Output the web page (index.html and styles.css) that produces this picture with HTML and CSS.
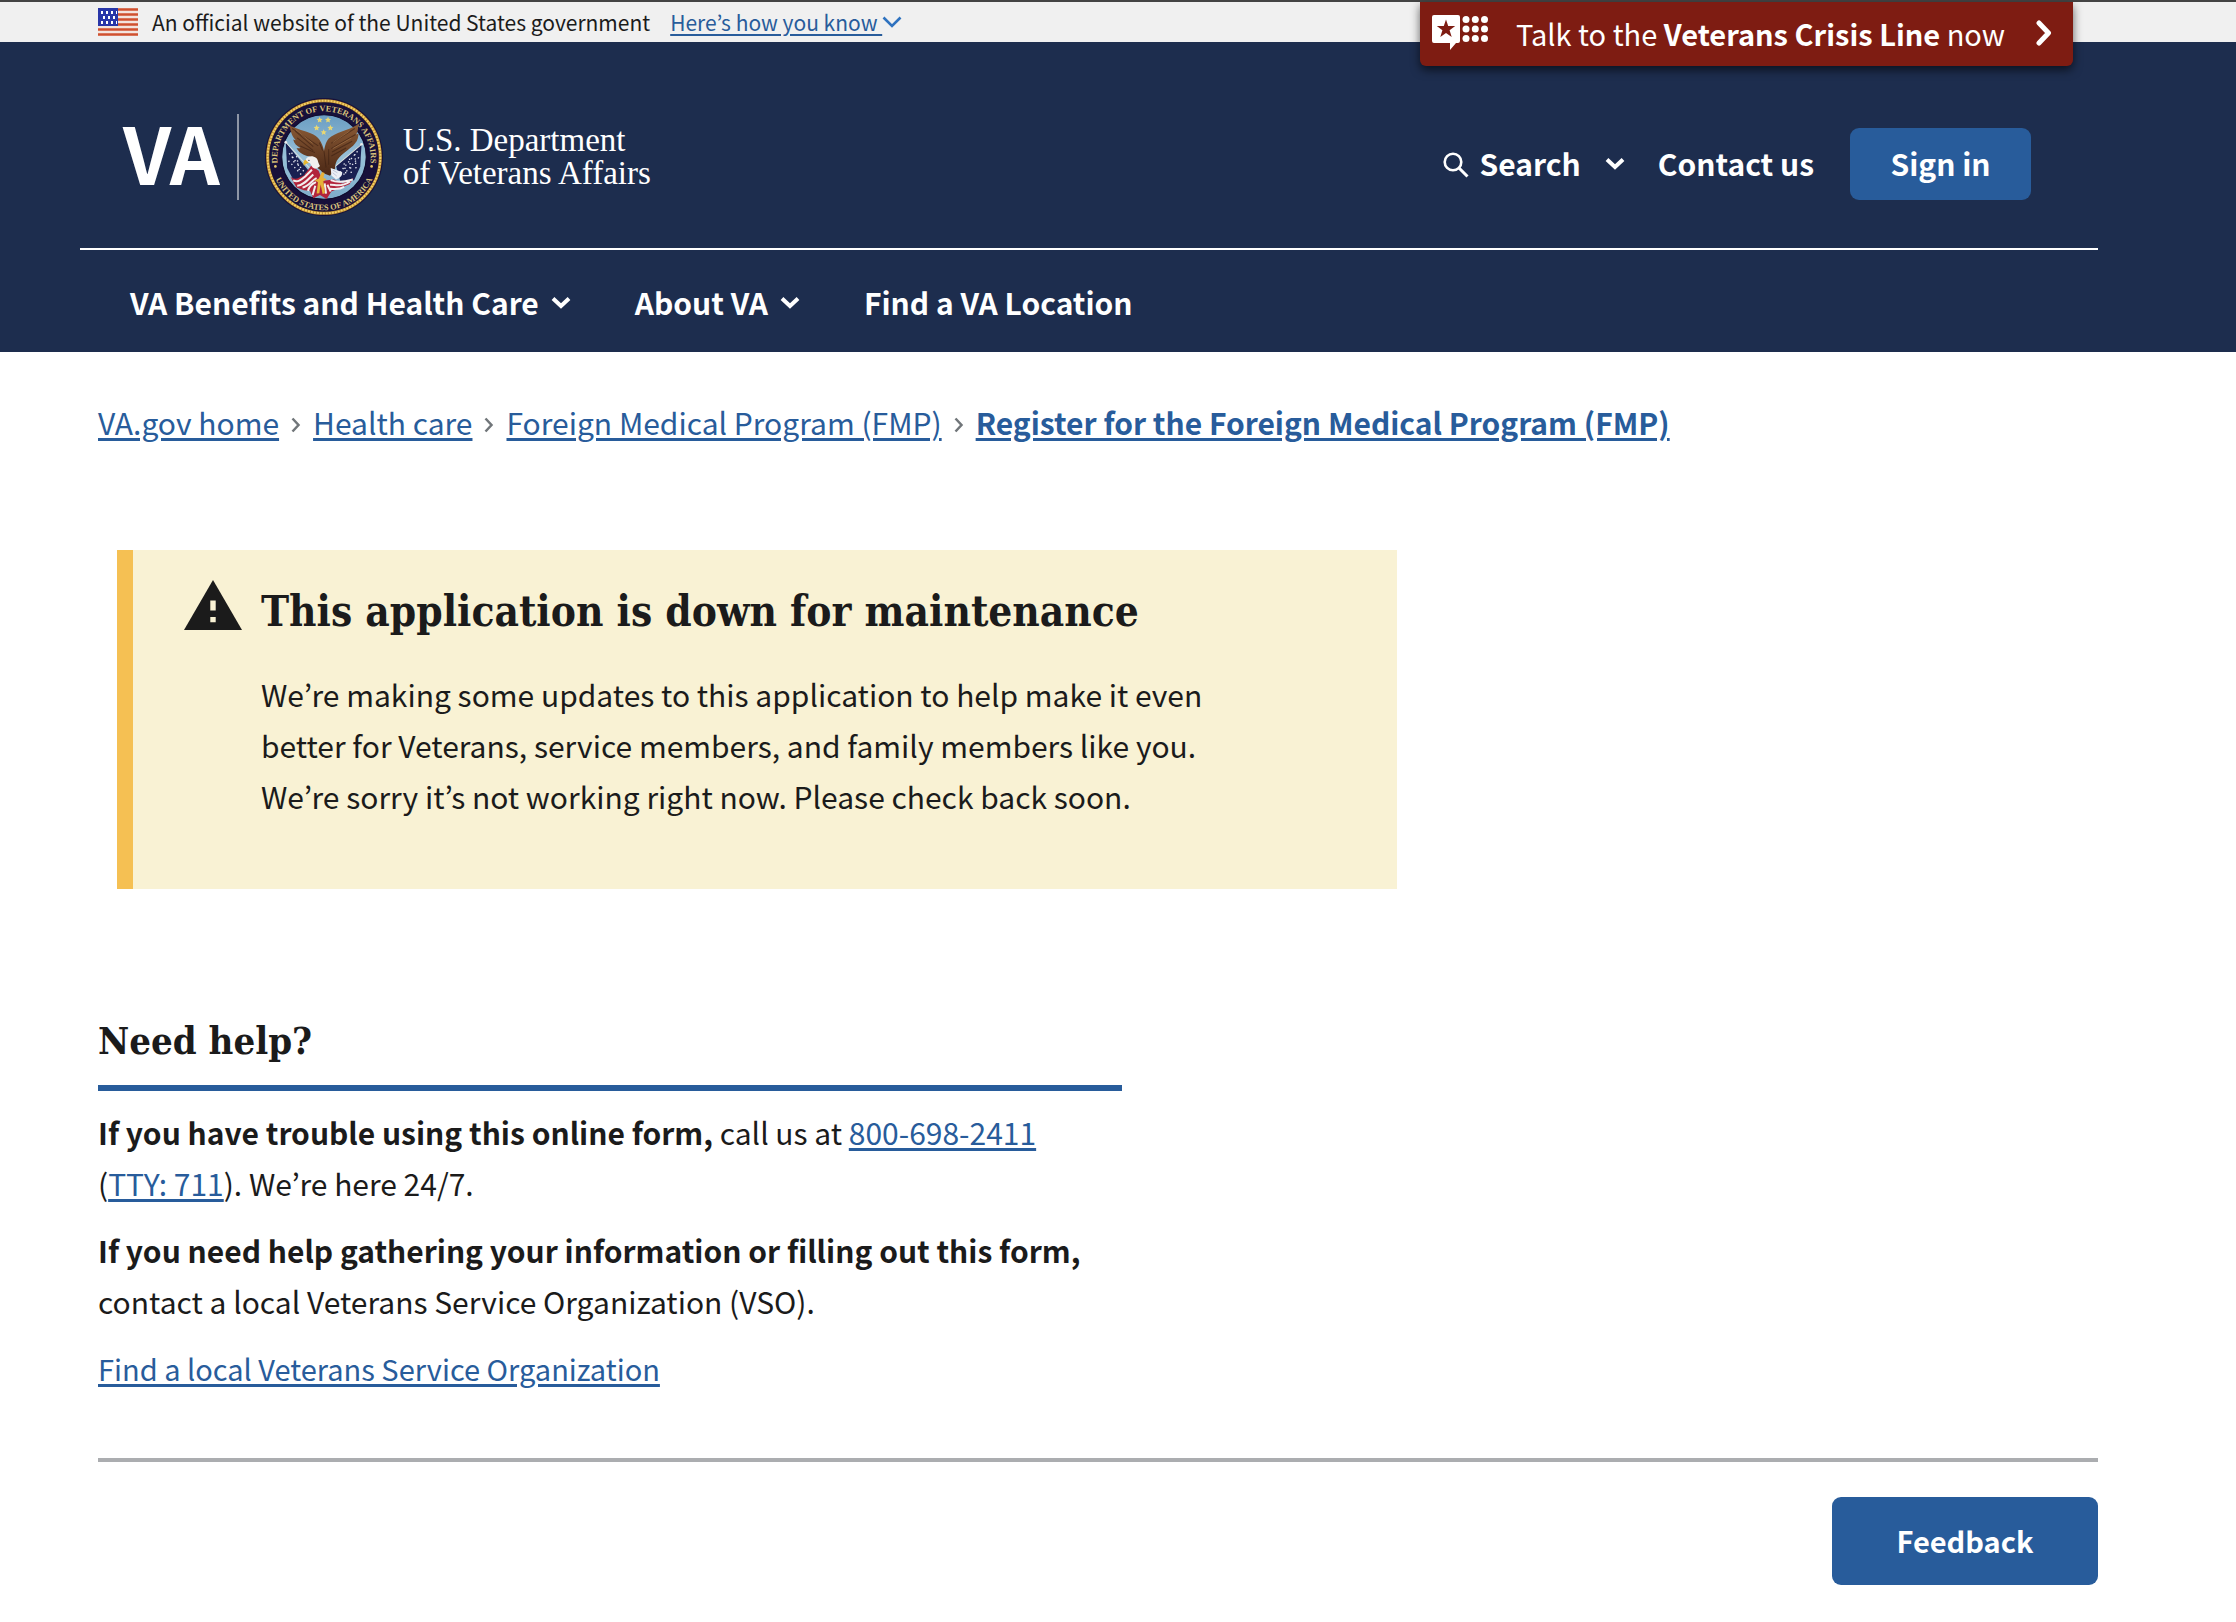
FILE: index.html
```html
<!DOCTYPE html>
<html lang="en">
<head>
<meta charset="utf-8">
<meta name="viewport" content="width=device-width, initial-scale=1">
<title>Register for the Foreign Medical Program (FMP) | Veterans Affairs</title>
<link rel="stylesheet" href="styles.css">
</head>
<body>
<div class="gov-banner">
  <div class="gov-message">
    <svg class="flag" viewBox="0 0 40 28" aria-hidden="true">
      <rect width="40" height="28" fill="#f3e4de"/>
      <path d="M0 1.500h40M0 6.500h40M0 11.500h40M0 16.500h40M0 21.500h40M0 26.500h40" stroke="#d0502f" stroke-width="2.500"/>
      <rect width="20" height="18" fill="#2836a8"/>
      <path d="M3 4.500h16M5 9.500h15M3 14.500h16" stroke="#fff" stroke-width="3" stroke-dasharray="2 3"/>
    </svg>
    <span>An official website of the United States government</span>
    <button class="banner-toggle" type="button"><span class="toggle-label">Here’s how you know </span><svg class="toggle-chevron" viewBox="0 0 20 12" aria-hidden="true"><path d="M1.500 1.500 10 10l8.500-8.500" fill="none" stroke="#2e72bf" stroke-width="2.600"/></svg></button>
  </div>
  <button class="crisis-line" type="button">
    <svg class="crisis-icon" viewBox="0 0 56 36" aria-hidden="true">
      <path fill="#fff" d="M2 0h24q2 0 2 2v24q0 2-2 2h-2l-6 7v-7H2q-2 0-2-2V2Q0 0 2 0z"/>
      <path fill="#7e1c12" d="m14 4.500 2.200 6.600h7l-5.600 4.200 2.100 6.700-5.700-4.100L8.300 22l2.100-6.700-5.600-4.200h7z"/>
      <g fill="#fff"><circle cx="34" cy="4.500" r="3.500"/><circle cx="43.300" cy="4.500" r="3.500"/><circle cx="52.500" cy="4.500" r="3.500"/><circle cx="34" cy="14" r="3.500"/><circle cx="43.300" cy="14" r="3.500"/><circle cx="52.500" cy="14" r="3.500"/><circle cx="34" cy="23.500" r="3.500"/><circle cx="43.300" cy="23.500" r="3.500"/><circle cx="52.500" cy="23.500" r="3.500"/></g>
    </svg>
    <span>Talk to the <strong>Veterans Crisis Line</strong> now</span>
    <svg class="crisis-arrow" viewBox="0 0 16 26" aria-hidden="true"><path d="m3 3 9.500 10L3 23" fill="none" stroke="#fff" stroke-width="5" stroke-linejoin="round" stroke-linecap="round"/></svg>
  </button>
</div>

<header class="site-header">
  <div class="header-top">
    <a class="logo" href="#" aria-label="VA | U.S. Department of Veterans Affairs">
      <span class="logo-va">VA</span>
      <span class="logo-rule"></span>
      <svg class="seal" viewBox="28 25 352 352" aria-hidden="true">
        <defs>
          <path id="arc-top" d="M66 220A139 139 0 1 1 342 220"/>
          <path id="arc-bottom" d="M47 226A159 159 0 0 0 361 226"/>
          <linearGradient id="sky" x1="0" y1="0" x2="0" y2="1"><stop offset="0" stop-color="#6a9dc2"/><stop offset=".5" stop-color="#98c0d8"/><stop offset="1" stop-color="#7eacca"/></linearGradient>
          <linearGradient id="wing" x1="0" y1="0" x2="0" y2="1"><stop offset="0" stop-color="#8a5a35"/><stop offset="1" stop-color="#4a2715"/></linearGradient>
        </defs>
        <circle cx="204" cy="201" r="176" fill="#17103a"/>
        <circle cx="204" cy="201" r="168" fill="none" stroke="#b98a2e" stroke-width="9"/>
        <circle cx="204" cy="201" r="168" fill="none" stroke="#f3cf67" stroke-width="6" stroke-dasharray="6 3"/>
        <circle cx="204" cy="201" r="126" fill="url(#sky)" stroke="#0e0a2c" stroke-width="3"/>
        <g class="seal-text">
          <text><textPath href="#arc-top" startOffset="50%" text-anchor="middle">DEPARTMENT OF VETERANS AFFAIRS</textPath></text>
          <text><textPath href="#arc-bottom" startOffset="50%" text-anchor="middle">UNITED STATES OF AMERICA</textPath></text>
        </g>
        <circle cx="59" cy="229" r="4" fill="#e2c46b"/><circle cx="346" cy="229" r="4" fill="#e2c46b"/>
        <g fill="#ead873">
          <path id="star" d="m191 81 2.600 6 6.400.6-4.800 4.300 1.400 6.300-5.600-3.300-5.600 3.300 1.400-6.300-4.800-4.300 6.400-.6z"/>
          <use href="#star" x="25"/><use href="#star" x="-9" y="24"/><use href="#star" x="32" y="24"/><use href="#star" x="12" y="37"/>
        </g>
        <path d="m90 158 70 86-10 36-38-12-18-34z" fill="#191f51"/>
        <path d="m316 162-76 66 14 50 40-8 18-40z" fill="#191f51"/>
        <path d="M100 190l52 64M98 212l44 48M108 188l8 36M122 198l10 50M304 184l-52 62M308 202l-46 52M296 192l4 48M280 206l6 48M264 220l6 36" stroke="#e6e8f0" stroke-width="4" stroke-dasharray="4 9" fill="none"/>
        <path d="m90 157 92 100M316 163l-88 74" stroke="#dfe0dc" stroke-width="3"/>
        <circle cx="90" cy="157" r="4" fill="#eee"/><circle cx="316" cy="163" r="4" fill="#eee"/>
        <path d="M104 260c14 12 26 2 40-4l22-30 22 16 12 30 34-4 24 12 34-16-12 18-34 14-20 8-14 22-20-12-20 10-10-22-18-2-22-8z" fill="#b2243b"/>
        <path d="M112 271c14 7 24-2 36-12l20-20M124 287c16 0 30-16 48-34M140 292c18-3 28-22 42-28M156 302c4-14 14-22 24-26M222 284c14-2 30 10 60-10M222 296c14 0 26 4 42-6M224 270c20 8 34 6 66-2M170 315l8-28M210 310l-4-30M224 304l-10-20" stroke="#f2eeee" stroke-width="6" fill="none"/>
        <path fill="url(#wing)" d="M102 108c24 10 44 16 62 22 24 9 34 26 40 52 4-18 6-26 14-36 18-18 58-24 87-42 2 14-1 23-5 30l7-3c-1 15-4 22-10 29-7 10-20 18-36 31-17 14-24 26-24 44l-15 22-22-8c-6-14-22-14-30-30-6-11-6-16-10-20-18-3-30-11-38-25 4 1 8 1 12 0-12-6-19-13-22-25l8 2c-9-9-16-22-18-43z"/>
        <path d="M118 124l54 46M124 144l48 38M133 168l44 20M109 116l78 52M296 116l-70 44M298 134l-72 42M288 154l-60 32M270 174l-44 24M204 184l6 48M218 178v46M190 158l10 24" stroke="#3d2012" stroke-width="3" fill="none" opacity=".65"/>
        <path d="M120 120l50 40M280 124l-50 34M286 144l-56 32" stroke="#a57548" stroke-width="2" fill="none"/>
        <path d="M149 211c3-13 20-16 32-7 6 5 4 12 11 24-8 9-18 10-24 1l-6-10c-5 1-10-2-13-8z" fill="#f1f0ef"/>
        <path d="M149 209c-6 2-8 8-5 18 5-5 9-7 15-8z" fill="#e8b72f"/><circle cx="159" cy="211" r="2" fill="#222"/>
        <path d="m224 234 34 12c2 10-6 18-18 22l-14-12z" fill="#eceff5"/><path d="M230 240l14 8M230 248l12 10" stroke="#aab4ca" stroke-width="2"/>
        <path d="M198 246l-10 20-12 4 10 6-4 34 8-1 4-26 6 28 7-2-5-36 10-6-10-4 4-14z" fill="#e6b23a"/>
      </svg>
      <span class="logo-name">U.S. Department<br>of Veterans Affairs</span>
    </a>
    <div class="header-actions">
      <button class="header-link search" type="button">
        <svg class="search-icon" viewBox="0 0 26 26" aria-hidden="true"><circle cx="10" cy="10" r="8.300" fill="none" stroke="#fff" stroke-width="2.600"/><path d="m16 16 8.500 8.500" stroke="#fff" stroke-width="3"/></svg>
        <span>Search</span>
        <svg class="chevron" viewBox="0 0 20 13" aria-hidden="true"><path d="m2 2.500 8 7.500 8-7.500" fill="none" stroke="#fff" stroke-width="4"/></svg>
      </button>
      <a class="header-link" href="#">Contact us</a>
      <button class="button sign-in" type="button">Sign in</button>
    </div>
  </div>
  <nav class="main-nav" aria-label="Main">
    <button class="header-link" type="button">VA Benefits and Health Care <svg class="chevron" viewBox="0 0 20 13" aria-hidden="true"><path d="m2 2.500 8 7.500 8-7.500" fill="none" stroke="#fff" stroke-width="4"/></svg></button>
    <button class="header-link" type="button">About VA <svg class="chevron" viewBox="0 0 20 13" aria-hidden="true"><path d="m2 2.500 8 7.500 8-7.500" fill="none" stroke="#fff" stroke-width="4"/></svg></button>
    <a class="header-link" href="#">Find a VA Location</a>
  </nav>
</header>

<main class="content">
  <nav class="breadcrumbs" aria-label="Breadcrumb">
    <a href="#">VA.gov home</a>
    <svg class="crumb-arrow" viewBox="0 0 10 16" aria-hidden="true"><path d="m1.500 1.500 6 6.500-6 6.500" fill="none" stroke="#71767a" stroke-width="2.500"/></svg>
    <a href="#">Health care</a>
    <svg class="crumb-arrow" viewBox="0 0 10 16" aria-hidden="true"><path d="m1.500 1.500 6 6.500-6 6.500" fill="none" stroke="#71767a" stroke-width="2.500"/></svg>
    <a href="#">Foreign Medical Program (FMP)</a>
    <svg class="crumb-arrow" viewBox="0 0 10 16" aria-hidden="true"><path d="m1.500 1.500 6 6.500-6 6.500" fill="none" stroke="#71767a" stroke-width="2.500"/></svg>
    <a class="current" href="#" aria-current="page">Register for the Foreign Medical Program (FMP)</a>
  </nav>

  <section class="alert">
    <svg class="alert-icon" viewBox="0 0 58 50" aria-hidden="true"><path fill="#1b1b1b" d="M29 0 58 50H0z"/><path fill="#f9f2d4" d="M26.300 20.500h5.400v10h-5.400zM26.300 37h5.400v5.300h-5.400z"/></svg>
    <div class="alert-body">
      <h1 class="alert-title">This application is down for maintenance</h1>
      <p>We’re making some updates to this application to help make it even better for Veterans, service members, and family members like you. We’re sorry it’s not working right now. Please check back soon.</p>
    </div>
  </section>

  <section class="help">
    <h2 class="help-title">Need help?</h2>
    <p><strong>If you have trouble using this online form,</strong> call us at <a href="#">800-698-2411</a> <span class="tty">(<a href="#">TTY: 711</a>).</span> We’re here 24/7.</p>
    <p><strong>If you need help gathering your information or filling out this form,</strong> contact a local Veterans Service Organization (VSO).</p>
    <p class="help-link"><a href="#">Find a local Veterans Service Organization</a></p>
  </section>

  <div class="feedback">
    <button class="button feedback-button" type="button">Feedback</button>
  </div>
</main>
</body>
</html>
```
FILE: styles.css
```css
* { box-sizing: border-box; }

body {
  margin: 0;
  background: #fff;
  color: #1b1b1b;
  font-family: "Noto Sans CJK JP", "Noto Sans CJK SC", "Open Sans", sans-serif;
  font-size: 30px;
  line-height: 51px;
}

h1, h2, p { margin: 0; }
svg { display: block; flex: none; }

a {
  color: #285c9b;
  text-decoration-thickness: 3px;
  text-underline-offset: 3px;
}

button {
  margin: 0;
  padding: 0;
  border: 0;
  background: none;
  color: inherit;
  font: inherit;
  cursor: pointer;
}

/* Government banner */
.gov-banner {
  display: flex;
  justify-content: space-between;
  align-items: flex-start;
  height: 42px;
  padding: 0 163px 0 98px;
  border-top: 2px solid #444;
  background: #f0f0f0;
}

.gov-message {
  display: flex;
  align-items: center;
  height: 40px;
  font-size: 21px;
  line-height: 40px;
}

.flag { width: 40px; height: 28px; margin-right: 14px; }

.banner-toggle {
  display: flex;
  align-items: center;
  margin-left: 20px;
  color: #285c9b;
}

.toggle-label {
  white-space: pre;
  text-decoration: underline;
  text-decoration-thickness: 2px;
  text-underline-offset: 3px;
}

.toggle-chevron { width: 20px; height: 12px; }

.crisis-line {
  position: relative;
  display: flex;
  align-items: center;
  width: 653px;
  height: 64px;
  padding: 0 21px 2px 12px;
  border-radius: 0 0 6px 6px;
  background: #7e1c12;
  box-shadow: 0 4px 10px rgba(0, 0, 0, .6);
  color: #fff;
  font-size: 29px;
}

.crisis-icon { width: 56px; height: 36px; margin-right: 28px; }
.crisis-arrow { width: 16px; height: 26px; margin-left: auto; }

/* Header */
.site-header {
  padding: 0 138px 0 80px;
  background: #1d2d4e;
  color: #fff;
}

.header-top {
  display: flex;
  justify-content: space-between;
  height: 208px;
  padding: 56px 67px 0 43px;
  border-bottom: 2px solid #fff;
}

.logo {
  display: flex;
  align-items: center;
  height: 118px;
  color: #fff;
  text-decoration: none;
}

.logo-va {
  align-self: flex-start;
  font-size: 78px;
  font-weight: 700;
  line-height: 106px;
}

.logo-rule {
  width: 2px;
  height: 86px;
  margin: 0 26px 0 17px;
  background: #8e96a6;
}

.seal { width: 118px; height: 118px; margin-right: 20px; }

.seal-text {
  fill: #d9c27c;
  font-family: "Liberation Serif", serif;
  font-size: 25px;
  font-weight: 700;
}

.logo-name {
  font-family: "Liberation Serif", serif;
  font-size: 33px;
  line-height: 33px;
}

.header-actions {
  display: flex;
  align-items: center;
  height: 72px;
  margin-top: 30px;
}

.header-link {
  display: flex;
  align-items: center;
  padding-bottom: 2px;
  color: #fff;
  font-weight: 700;
  text-decoration: none;
}

.chevron { width: 20px; height: 13px; margin-left: 12px; }
.search-icon { width: 26px; height: 26px; margin: 4px 11px 0 0; }
.search { margin-right: 33px; }
.search .chevron { margin-left: 24px; }

.button {
  padding-bottom: 2px;
  border-radius: 9px;
  background: #285c9b;
  color: #fff;
  font-weight: 700;
}

.sign-in { width: 181px; height: 72px; margin-left: 36px; }

.main-nav {
  display: flex;
  align-items: center;
  gap: 64px;
  height: 102px;
  padding: 4px 50px 0;
}

/* Page content */
.content { padding: 45px 138px 36px 98px; }

.breadcrumbs {
  display: flex;
  align-items: center;
  gap: 12px;
}

.crumb-arrow { width: 10px; height: 16px; margin-top: 4px; }
.current { font-weight: 700; }

.alert {
  display: flex;
  gap: 19px;
  max-width: 1280px;
  margin: 102px 0 0 19px;
  padding: 30px 168px 67px 51px;
  border-left: 16px solid #f5c053;
  background: #f9f2d4;
}

.alert-icon { width: 58px; height: 50px; }

.alert-title,
.help-title {
  font-family: "DejaVu Serif Condensed", "DejaVu Serif", serif;
  font-size: 38px;
  font-weight: 700;
  line-height: 48px;
}

.alert-title { padding: 8px 0 33px; font-size: 42px; }

.help {
  display: grid;
  gap: 16px;
  max-width: 1024px;
  margin-top: 128px;
}

.help-title {
  padding-bottom: 20px;
  border-bottom: 6px solid #285c9b;
}

.help-link { font-size: 29px; }
.tty { white-space: nowrap; }

.feedback {
  display: flex;
  justify-content: flex-end;
  margin-top: 64px;
  padding-top: 35px;
  border-top: 4px solid #abadb0;
}

.feedback-button { width: 266px; height: 88px; font-size: 29px; }
```
